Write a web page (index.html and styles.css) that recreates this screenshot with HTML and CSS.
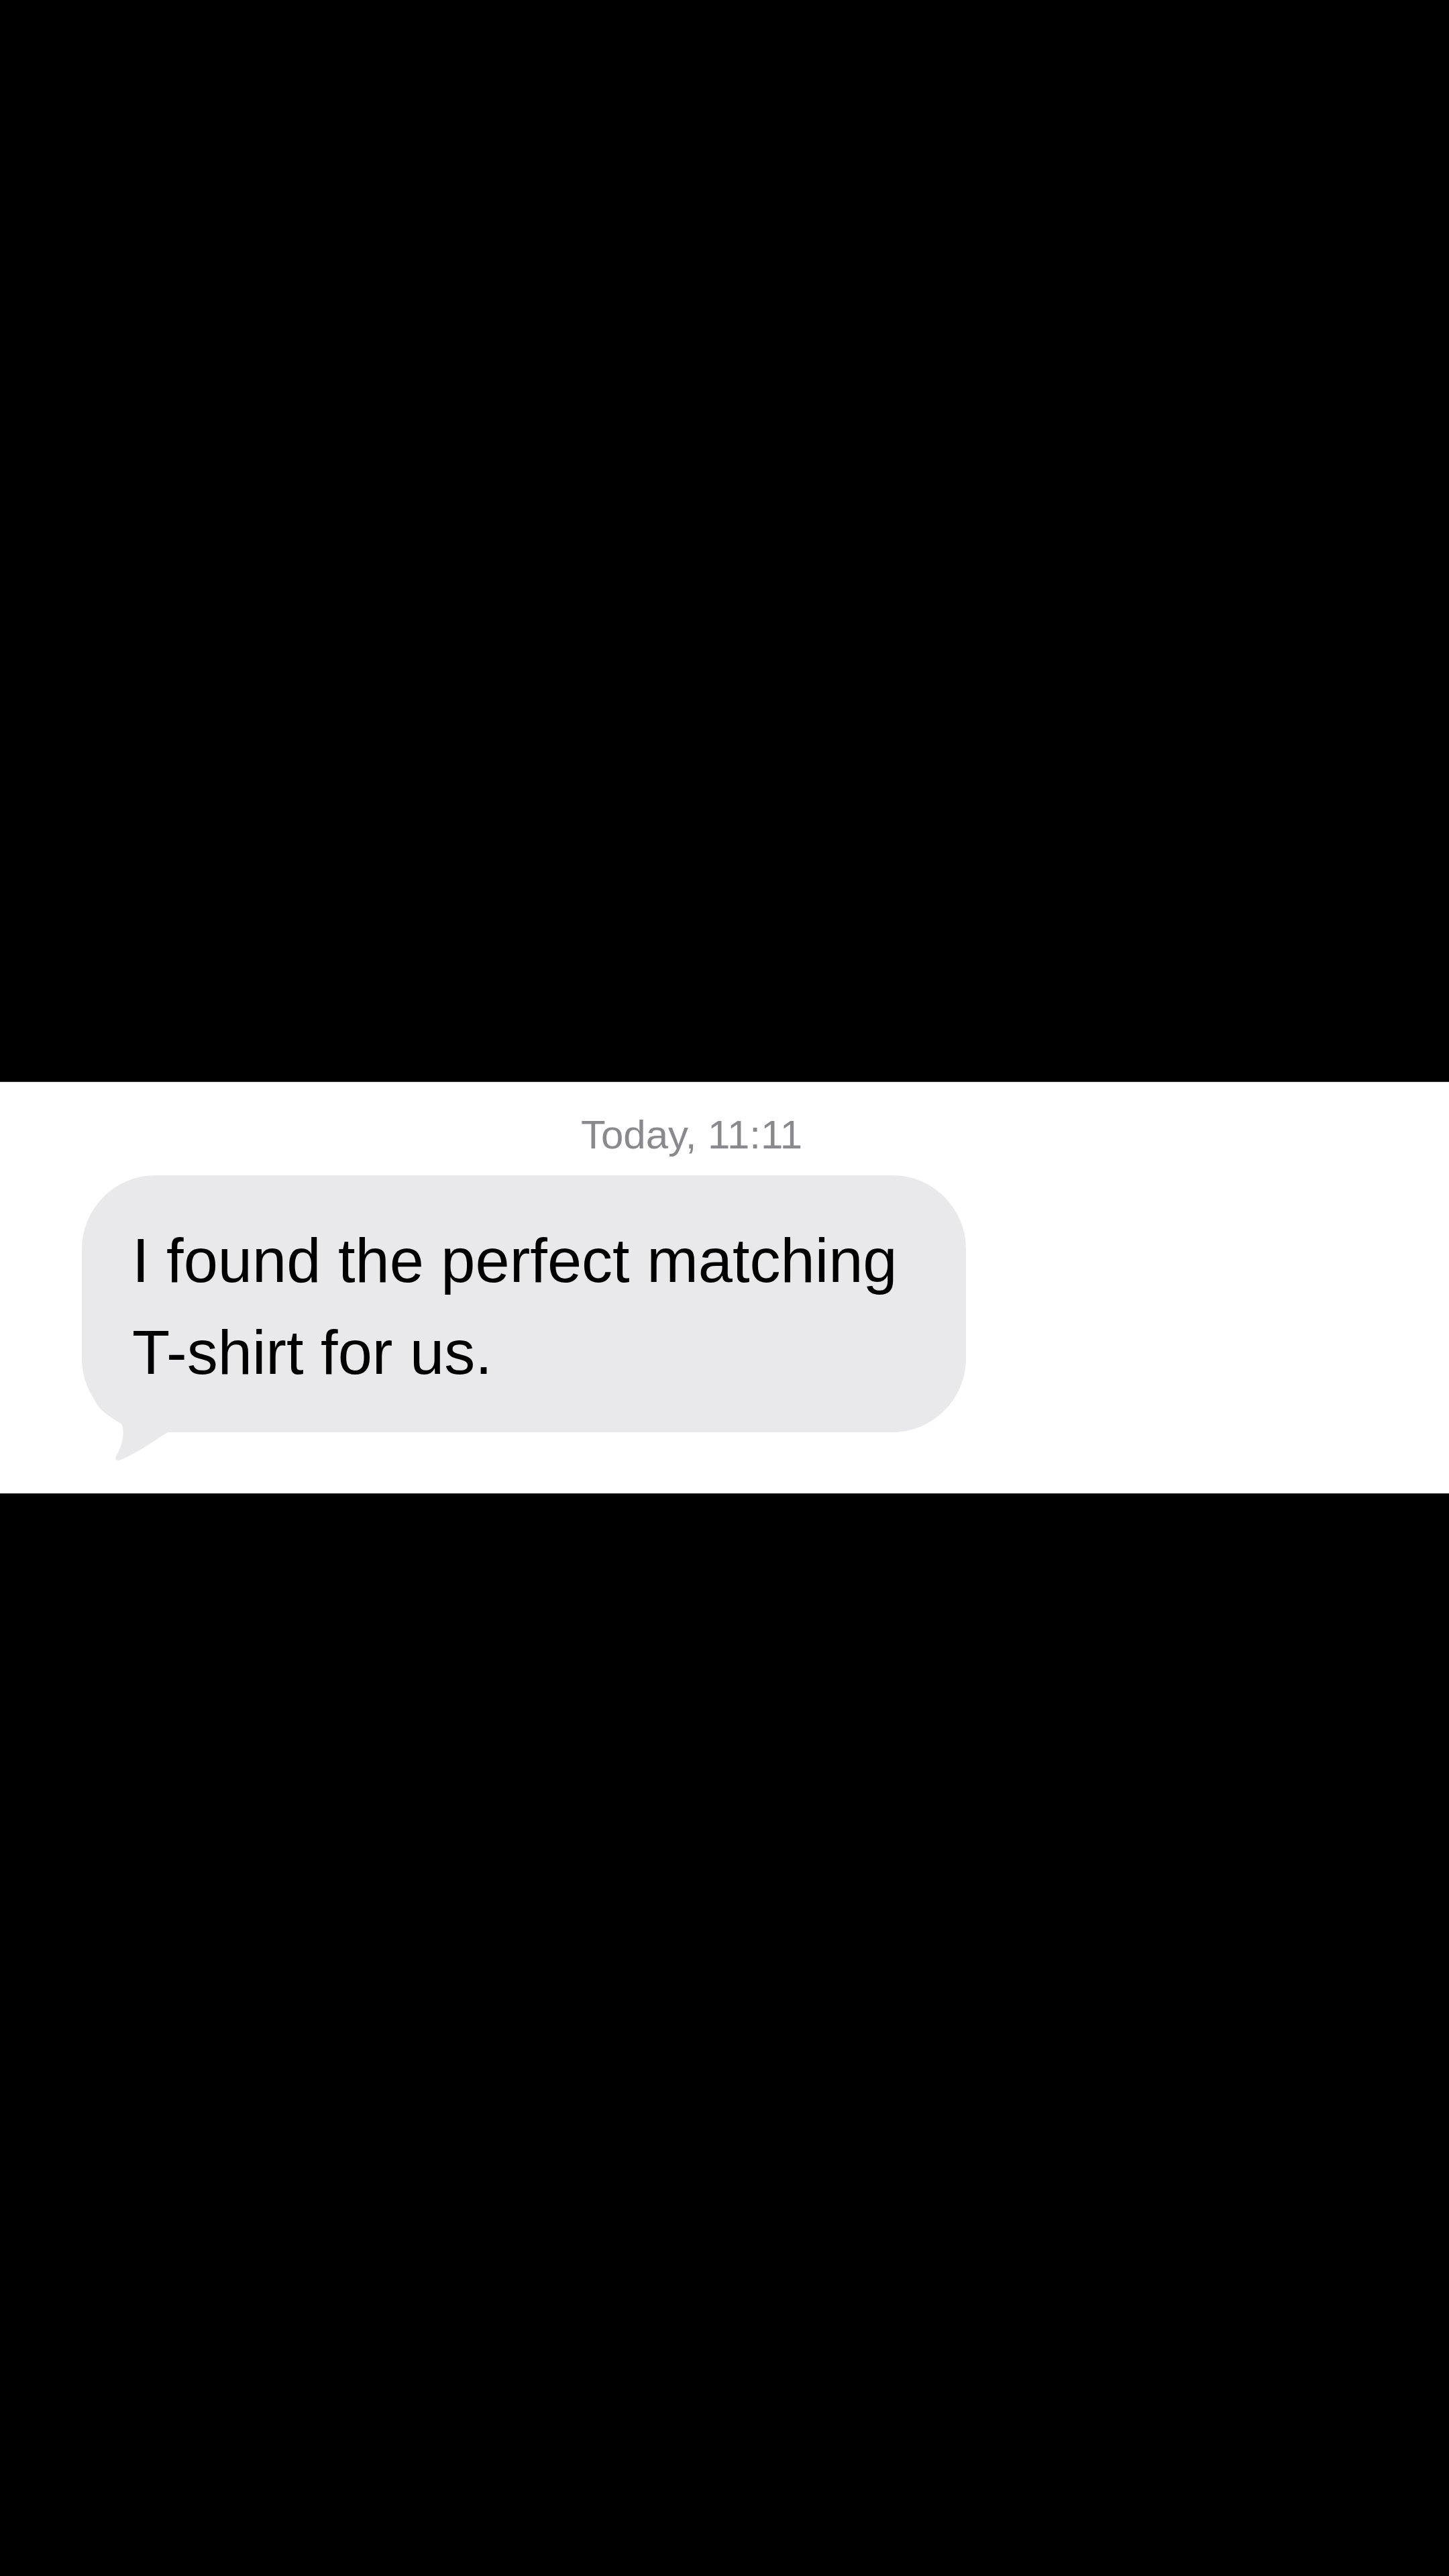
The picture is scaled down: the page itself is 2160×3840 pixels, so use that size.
FILE: index.html
```html
<!DOCTYPE html>
<html lang="en">
<head>
<meta charset="utf-8">
<title>Message</title>
<link rel="stylesheet" href="styles.css">
</head>
<body>
<div class="screen">
  <div class="black-top"></div>
  <section class="chat">
    <div class="stamp-row"><span class="stamp">Today, 11:11</span></div>
    <div class="bubble-row">
      <div class="bubble">
        <p class="msg">I found the perfect matching<br>T-shirt for us.</p>
        <svg class="tail" width="160" height="110" viewBox="0 0 160 110" aria-hidden="true">
          <path d="M18 10 C26 30 45 38 58 46 C64 55 63 75 52 94 C48 100 52 104 58 101 C80 92 100 78 128 60 L160 60 L160 0 L18 0 Z" fill="#e9e9eb"/>
        </svg>
      </div>
    </div>
  </section>
</div>
</body>
</html>
```
FILE: styles.css
```css
html, body {
  margin: 0;
  padding: 0;
  background: #000;
}
.screen {
  width: 2160px;
  height: 3840px;
  background: #000;
  display: flex;
  flex-direction: column;
}
.black-top {
  height: 1612px;
  flex: none;
}
.chat {
  flex: none;
  height: 615px;
  box-sizing: border-box;
  background: #fff;
  border-top: 1px solid #3a3a3a;
  border-bottom: 1px solid #3a3a3a;
  padding-top: 44px;
  display: flex;
  flex-direction: column;
  gap: 25px;
}
.stamp-row {
  display: flex;
  padding-left: 866px;
}
.stamp {
  font-family: "Liberation Sans", Arial, sans-serif;
  font-size: 60px;
  line-height: 70px;
  color: #8a8a8e;
}
.bubble-row {
  display: flex;
  padding-left: 122px;
}
.bubble {
  position: relative;
  width: 1318px;
  height: 383px;
  box-sizing: border-box;
  background: #e9e9eb;
  border-radius: 110px;
  padding: 59px 40px 50px 75px;
}
.msg {
  margin: 0;
  font-family: "Liberation Sans", Arial, sans-serif;
  font-size: 92px;
  line-height: 137px;
  color: #000;
  white-space: nowrap;
}
.tail {
  position: absolute;
  left: 0;
  top: 323px;
  display: block;
}
```
